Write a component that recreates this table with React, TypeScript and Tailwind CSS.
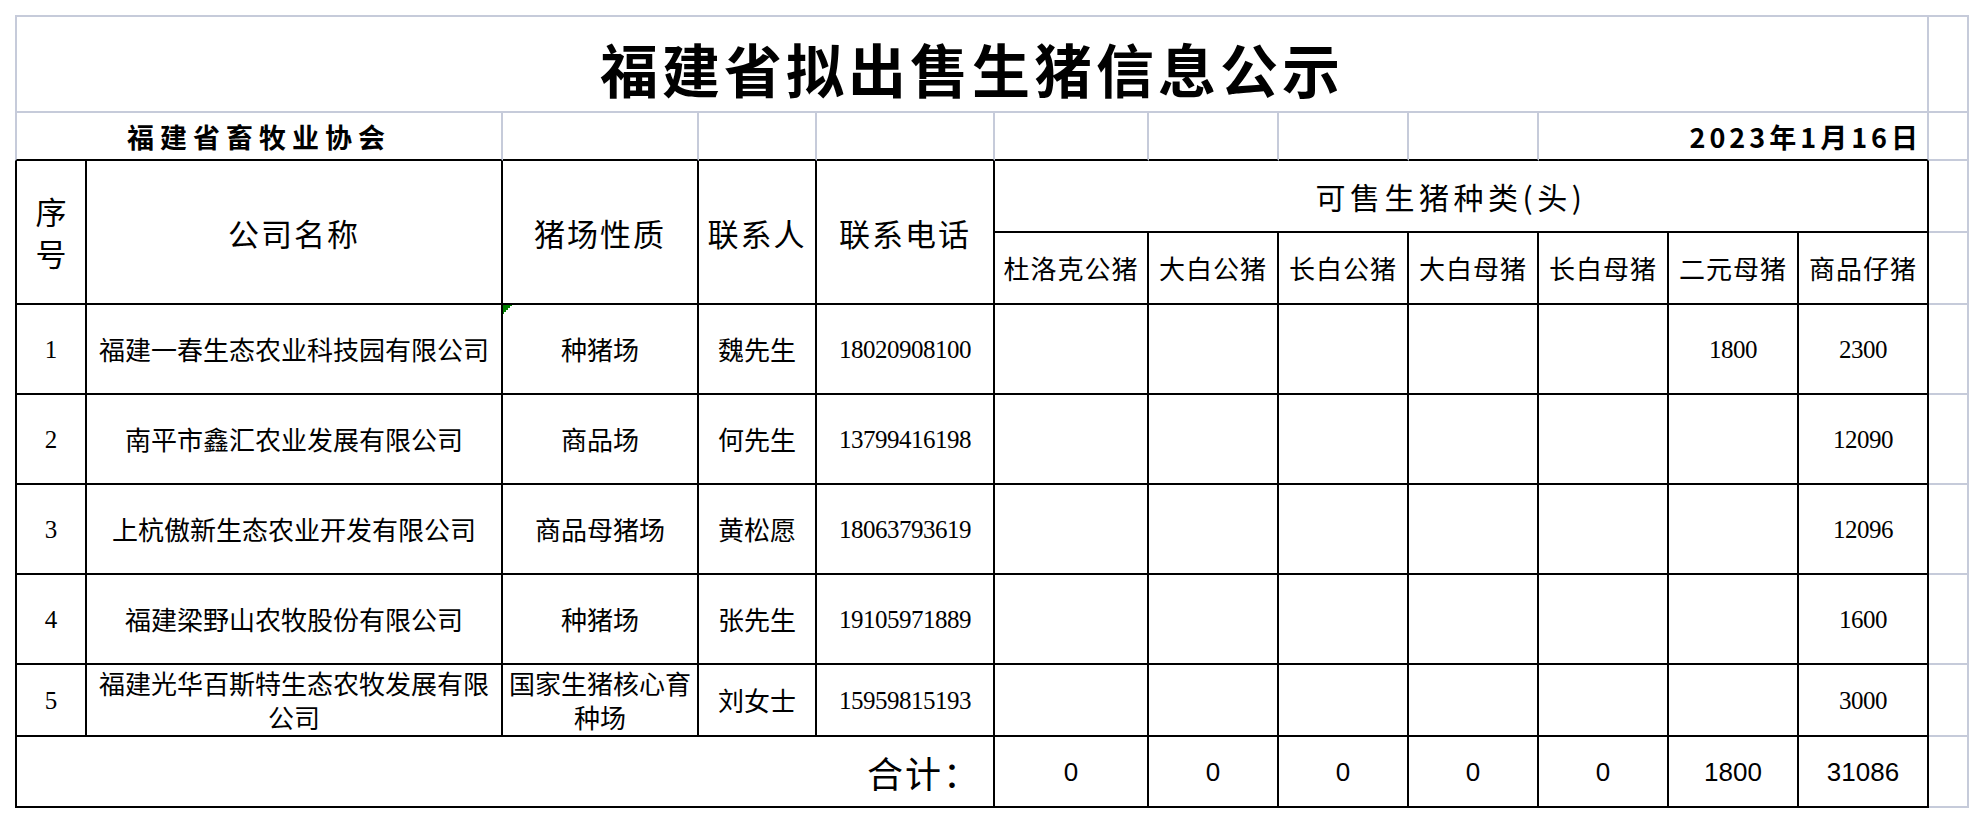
import React from "react";

type Row = {
  n: string;
  name: React.ReactNode;
  type: React.ReactNode;
  person: string;
  phone: string;
  vals: string[];
};

const rows: Row[] = [
  { n: "1", name: "福建一春生态农业科技园有限公司", type: "种猪场", person: "魏先生", phone: "18020908100", vals: ["", "", "", "", "", "1800", "2300"] },
  { n: "2", name: "南平市鑫汇农业发展有限公司", type: "商品场", person: "何先生", phone: "13799416198", vals: ["", "", "", "", "", "", "12090"] },
  { n: "3", name: "上杭傲新生态农业开发有限公司", type: "商品母猪场", person: "黄松愿", phone: "18063793619", vals: ["", "", "", "", "", "", "12096"] },
  { n: "4", name: "福建梁野山农牧股份有限公司", type: "种猪场", person: "张先生", phone: "19105971889", vals: ["", "", "", "", "", "", "1600"] },
  {
    n: "5",
    name: (
      <>
        福建光华百斯特生态农牧发展有限
        <br />
        公司
      </>
    ),
    type: (
      <>
        国家生猪核心育
        <br />
        种场
      </>
    ),
    person: "刘女士",
    phone: "15959815193",
    vals: ["", "", "", "", "", "", "3000"],
  },
];

const subHeads = ["杜洛克公猪", "大白公猪", "长白公猪", "大白母猪", "长白母猪", "二元母猪", "商品仔猪"];
const totals = ["0", "0", "0", "0", "0", "1800", "31086"];

const base = "flex items-center justify-center text-center text-black";
const BK = "border-r-2 border-b-2 border-black";
const GR = "border-r-2 border-b-2 border-[#c6cbda]";
const R2 = "border-r-2 border-b-2 border-[#c6cbda] border-b-black";

function Extra() {
  return <div className={GR} />;
}

export default function App() {
  return (
    <div className="bg-white w-[1984px] h-[824px] pt-[15px] pl-[15px] font-['Noto_Sans_CJK_SC',sans-serif] text-black">
      <div className="grid grid-cols-[72px_416px_196px_118px_178px_154px_130px_130px_130px_130px_130px_130px_40px] grid-rows-[98px_48px_72px_72px_90px_90px_90px_90px_72px_71px] w-[1954px]">
        {/* Title row */}
        <div className={`${base} col-span-12 border-2 border-[#c6cbda] pt-[8px] text-[58px] font-bold tracking-[4px] leading-none`}>
          福建省拟出售生猪信息公示
        </div>
        <div className="border-t-2 border-r-2 border-b-2 border-[#c6cbda]" />

        {/* Row 2 */}
        <div className={`${base} col-span-2 border-l-2 border-r-2 border-b-2 border-[#c6cbda] border-b-black text-[27px] font-bold tracking-[6px] leading-none`}>
          福建省畜牧业协会
        </div>
        <div className={R2} />
        <div className={R2} />
        <div className={R2} />
        <div className={R2} />
        <div className={R2} />
        <div className={R2} />
        <div className={R2} />
        <div className="flex items-center justify-end col-span-3 border-r-2 border-b-2 border-[#c6cbda] border-b-black text-[27px] font-bold tracking-[4px] leading-none pr-[5px]">
          2023年1月16日
        </div>
        <Extra />

        {/* Header rows */}
        <div className={`${base} row-span-2 border-l-2 ${BK} text-[31px] leading-[42px]`}>
          序<br />号
        </div>
        <div className={`${base} row-span-2 ${BK} text-[31px] tracking-[2px] leading-none`}>公司名称</div>
        <div className={`${base} row-span-2 ${BK} text-[31px] tracking-[2px] leading-none`}>猪场性质</div>
        <div className={`${base} row-span-2 ${BK} text-[31px] tracking-[2px] leading-none`}>联系人</div>
        <div className={`${base} row-span-2 ${BK} text-[31px] tracking-[2px] leading-none`}>联系电话</div>
        <div className={`${base} col-span-7 ${BK} text-[30px] tracking-[4.5px] leading-none pr-[20px]`}>可售生猪种类(头)</div>
        <Extra />
        {subHeads.map((h) => (
          <div key={h} className={`${base} ${BK} text-[26px] tracking-[1px] leading-none`}>
            {h}
          </div>
        ))}
        <Extra />

        {/* Data rows */}
        {rows.map((r) => (
          <React.Fragment key={r.n}>
            <div className={`${base} border-l-2 ${BK} font-['Liberation_Serif',serif] text-[25px] leading-none`}>{r.n}</div>
            <div className={`${base} ${BK} text-[26px] leading-[34px]`}>{r.name}</div>
            <div className={`${base} relative ${BK} text-[26px] leading-[34px]`}>
              {r.n === "1" && (
                <svg className="absolute left-0 top-0" width="9" height="9" viewBox="0 0 9 9">
                  <polygon points="0,0 9,0 9,1 7,1 7,3 5,3 5,5 3,5 3,7 1,7 1,9 0,9" fill="#008000" />
                </svg>
              )}
              {r.type}
            </div>
            <div className={`${base} ${BK} text-[26px] leading-none`}>{r.person}</div>
            <div className={`${base} ${BK} font-['Liberation_Serif',serif] text-[25px] tracking-[-0.5px] leading-none`}>{r.phone}</div>
            {r.vals.map((v, i) => (
              <div key={i} className={`${base} ${BK} font-['Liberation_Serif',serif] text-[25px] tracking-[-0.5px] leading-none`}>
                {v}
              </div>
            ))}
            <Extra />
          </React.Fragment>
        ))}

        {/* Total row */}
        <div className={`flex items-center justify-end col-span-5 border-l-2 ${BK} text-[36px] tracking-[2px] leading-none pr-[12px]`}>
          合计：
        </div>
        {totals.map((v, i) => (
          <div key={i} className={`${base} ${BK} font-['Liberation_Sans',sans-serif] text-[26px] leading-none`}>
            {v}
          </div>
        ))}
        <Extra />
      </div>
    </div>
  );
}
